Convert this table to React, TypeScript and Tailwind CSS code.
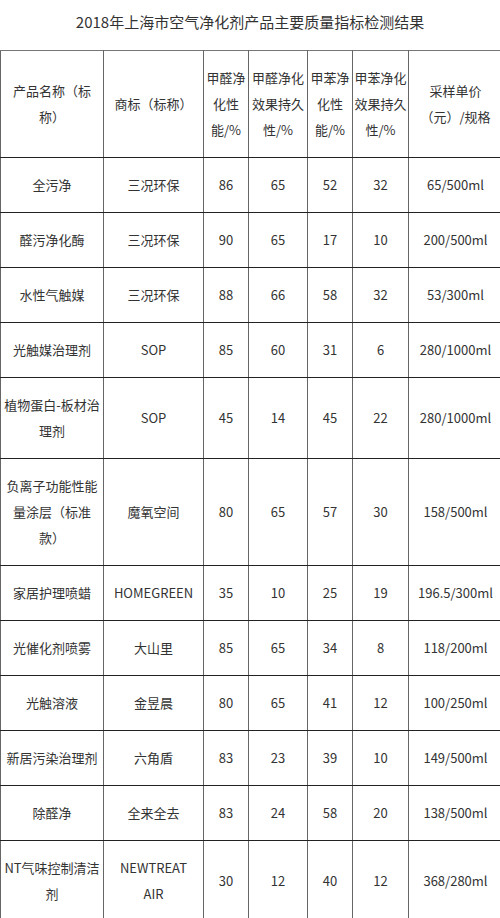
import React from "react";

type Cell = string | string[];

const rows: Cell[][] = [
  ["全污净", "三况环保", "86", "65", "52", "32", "65/500ml"],
  ["醛污净化酶", "三况环保", "90", "65", "17", "10", "200/500ml"],
  ["水性气触媒", "三况环保", "88", "66", "58", "32", "53/300ml"],
  ["光触媒治理剂", "SOP", "85", "60", "31", "6", "280/1000ml"],
  [["植物蛋白-板材治", "理剂"], "SOP", "45", "14", "45", "22", "280/1000ml"],
  [["负离子功能性能", "量涂层（标准", "款）"], "魔氧空间", "80", "65", "57", "30", "158/500ml"],
  ["家居护理喷蜡", "HOMEGREEN", "35", "10", "25", "19", "196.5/300ml"],
  ["光催化剂喷雾", "大山里", "85", "65", "34", "8", "118/200ml"],
  ["光触溶液", "金昱晨", "80", "65", "41", "12", "100/250ml"],
  ["新居污染治理剂", "六角盾", "83", "23", "39", "10", "149/500ml"],
  ["除醛净", "全来全去", "83", "24", "58", "20", "138/500ml"],
  [["NT气味控制清洁", "剂"], ["NEWTREAT", "AIR"], "30", "12", "40", "12", "368/280ml"],
];

const header: Cell[] = [
  ["产品名称（标", "称）"],
  "商标（标称）",
  ["甲醛净", "化性", "能/%"],
  ["甲醛净化", "效果持久", "性/%"],
  ["甲苯净", "化性", "能/%"],
  ["甲苯净化", "效果持久", "性/%"],
  ["采样单价", "（元）/规格"],
];

const widths = [103, 100, 45, 59, 45, 56, 94];

function Lines({ value }: { value: Cell }) {
  if (typeof value === "string") return <>{value}</>;
  return (
    <>
      {value.map((line, i) => (
        <React.Fragment key={i}>
          {i > 0 && <br />}
          {line}
        </React.Fragment>
      ))}
    </>
  );
}

const cellClass =
  "border-y border-y-[#222] border-x border-x-[#666] px-0 py-[14px] text-center align-middle whitespace-nowrap font-normal";

export default function App() {
  return (
    <div
      className="w-[500px] h-[918px] overflow-hidden bg-white text-[#333]"
      style={{ fontFamily: '"Noto Sans CJK SC", "Noto Sans", sans-serif' }}
    >
      {/* title */}
      <div className="h-[50px] pt-[11px] text-center text-[15px] leading-[22px] text-[#333]">
        2018年上海市空气净化剂产品主要质量指标检测结果
      </div>

      <table className="w-[502px] table-fixed border-collapse text-[13px] leading-[26px]">
        <colgroup>
          {widths.map((w, i) => (
            <col key={i} style={{ width: w }} />
          ))}
        </colgroup>
        <thead>
          <tr>
            {header.map((h, i) => (
              <th key={i} className={`${cellClass} border-t-[#777]`}>
                <Lines value={h} />
              </th>
            ))}
          </tr>
        </thead>
        <tbody>
          {rows.map((row, r) => (
            <tr key={r}>
              {row.map((c, i) => (
                <td key={i} className={cellClass}>
                  <Lines value={c} />
                </td>
              ))}
            </tr>
          ))}
        </tbody>
      </table>
    </div>
  );
}
